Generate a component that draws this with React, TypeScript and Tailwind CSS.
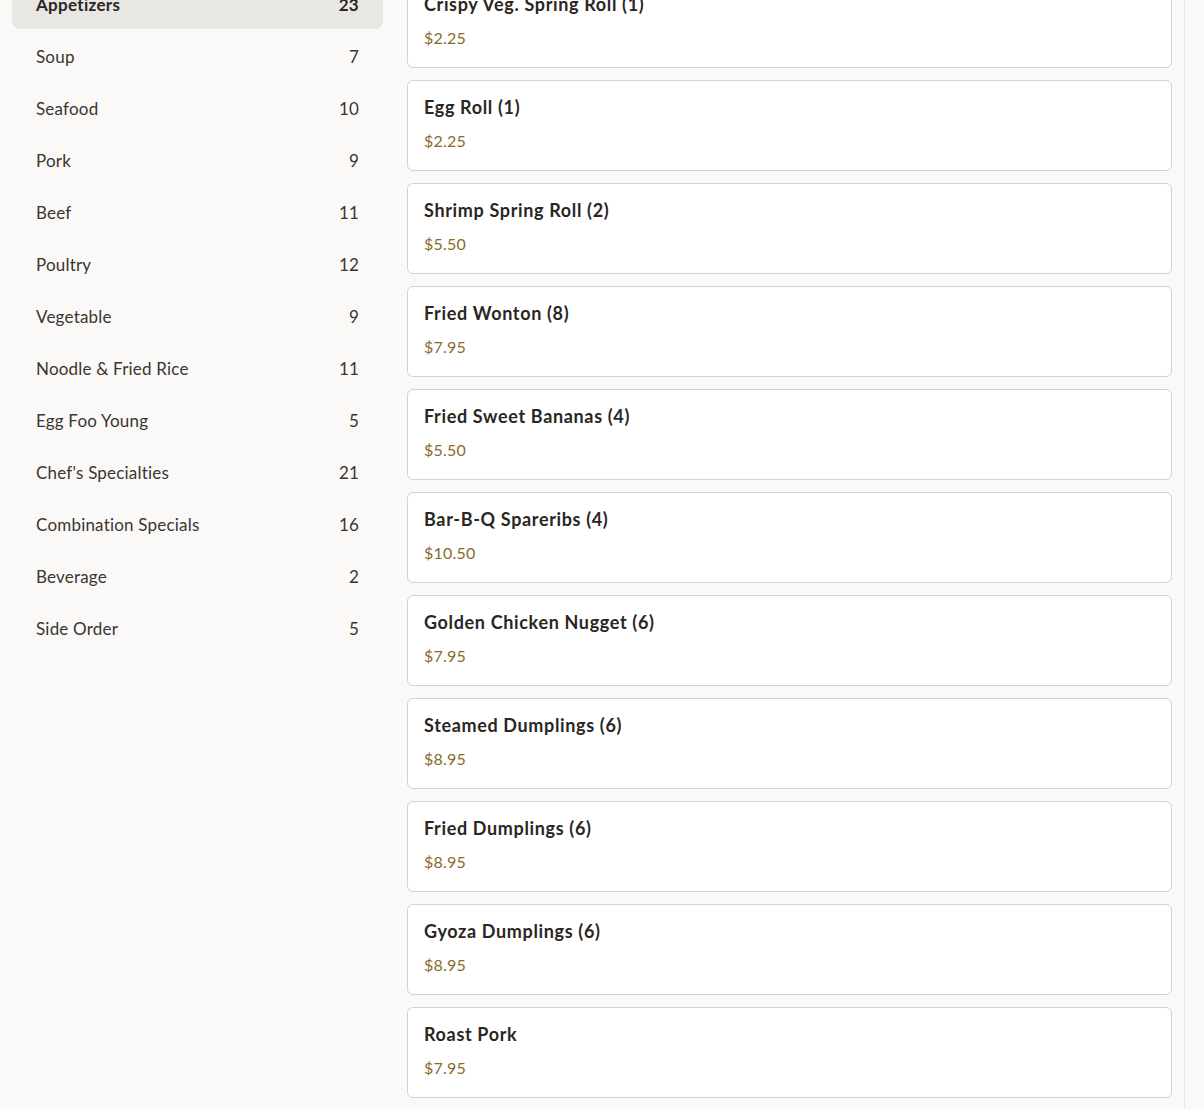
import React from "react";

type Category = { name: string; count: number };
type Item = { name: string; price: string };

const categories: Category[] = [
  { name: "Appetizers", count: 23 },
  { name: "Soup", count: 7 },
  { name: "Seafood", count: 10 },
  { name: "Pork", count: 9 },
  { name: "Beef", count: 11 },
  { name: "Poultry", count: 12 },
  { name: "Vegetable", count: 9 },
  { name: "Noodle & Fried Rice", count: 11 },
  { name: "Egg Foo Young", count: 5 },
  { name: "Chef's Specialties", count: 21 },
  { name: "Combination Specials", count: 16 },
  { name: "Beverage", count: 2 },
  { name: "Side Order", count: 5 },
];

const items: Item[] = [
  { name: "Crispy Veg. Spring Roll (1)", price: "$2.25" },
  { name: "Egg Roll (1)", price: "$2.25" },
  { name: "Shrimp Spring Roll (2)", price: "$5.50" },
  { name: "Fried Wonton (8)", price: "$7.95" },
  { name: "Fried Sweet Bananas (4)", price: "$5.50" },
  { name: "Bar-B-Q Spareribs (4)", price: "$10.50" },
  { name: "Golden Chicken Nugget (6)", price: "$7.95" },
  { name: "Steamed Dumplings (6)", price: "$8.95" },
  { name: "Fried Dumplings (6)", price: "$8.95" },
  { name: "Gyoza Dumplings (6)", price: "$8.95" },
  { name: "Roast Pork", price: "$7.95" },
  { name: "Roast Pork Egg Roll", price: "$3.25" },
];

export default function App() {
  return (
    <div
      className="h-[1109px] overflow-hidden bg-[#faf9f7] text-[#2b2622]"
      style={{ fontFamily: "Lato, 'Noto Sans', sans-serif" }}
    >
      <div className="flex -mt-[23px]">
        <div className="flex flex-1 gap-6 pl-3 pr-3">
          <nav className="w-[371px] shrink-0 flex flex-col">
            {categories.map((c, i) => (
              <div
                key={c.name}
                className={
                  i === 0
                    ? "flex h-[52px] items-center justify-between rounded-lg bg-[#e8e7e4] px-6 pt-[3px] text-[17px] tracking-[0.3px] font-bold text-[#2b2622]"
                    : "flex h-[52px] items-center justify-between rounded-lg px-6 pt-[3px] text-[17px] tracking-[0.2px] text-[#3a3531]"
                }
              >
                <span>{c.name}</span>
                <span>{c.count}</span>
              </div>
            ))}
          </nav>
          <main className="flex flex-1 flex-col gap-3">
            {items.map((it) => (
              <div
                key={it.name}
                className="rounded-md border border-[#d5d2ce] bg-white px-4 pt-[14px] pb-[17px]"
              >
                <div className="text-[18px] leading-6 font-bold tracking-[0.65px] text-[#2b2622]">{it.name}</div>
                <div className="mt-[10px] text-[16px] leading-6 tracking-[0.2px] text-[#8a6a2c]">{it.price}</div>
              </div>
            ))}
          </main>
        </div>
        <aside className="w-[20px] shrink-0 border-l border-[#e8e6e3] bg-[#faf9f7]" />
      </div>
    </div>
  );
}
